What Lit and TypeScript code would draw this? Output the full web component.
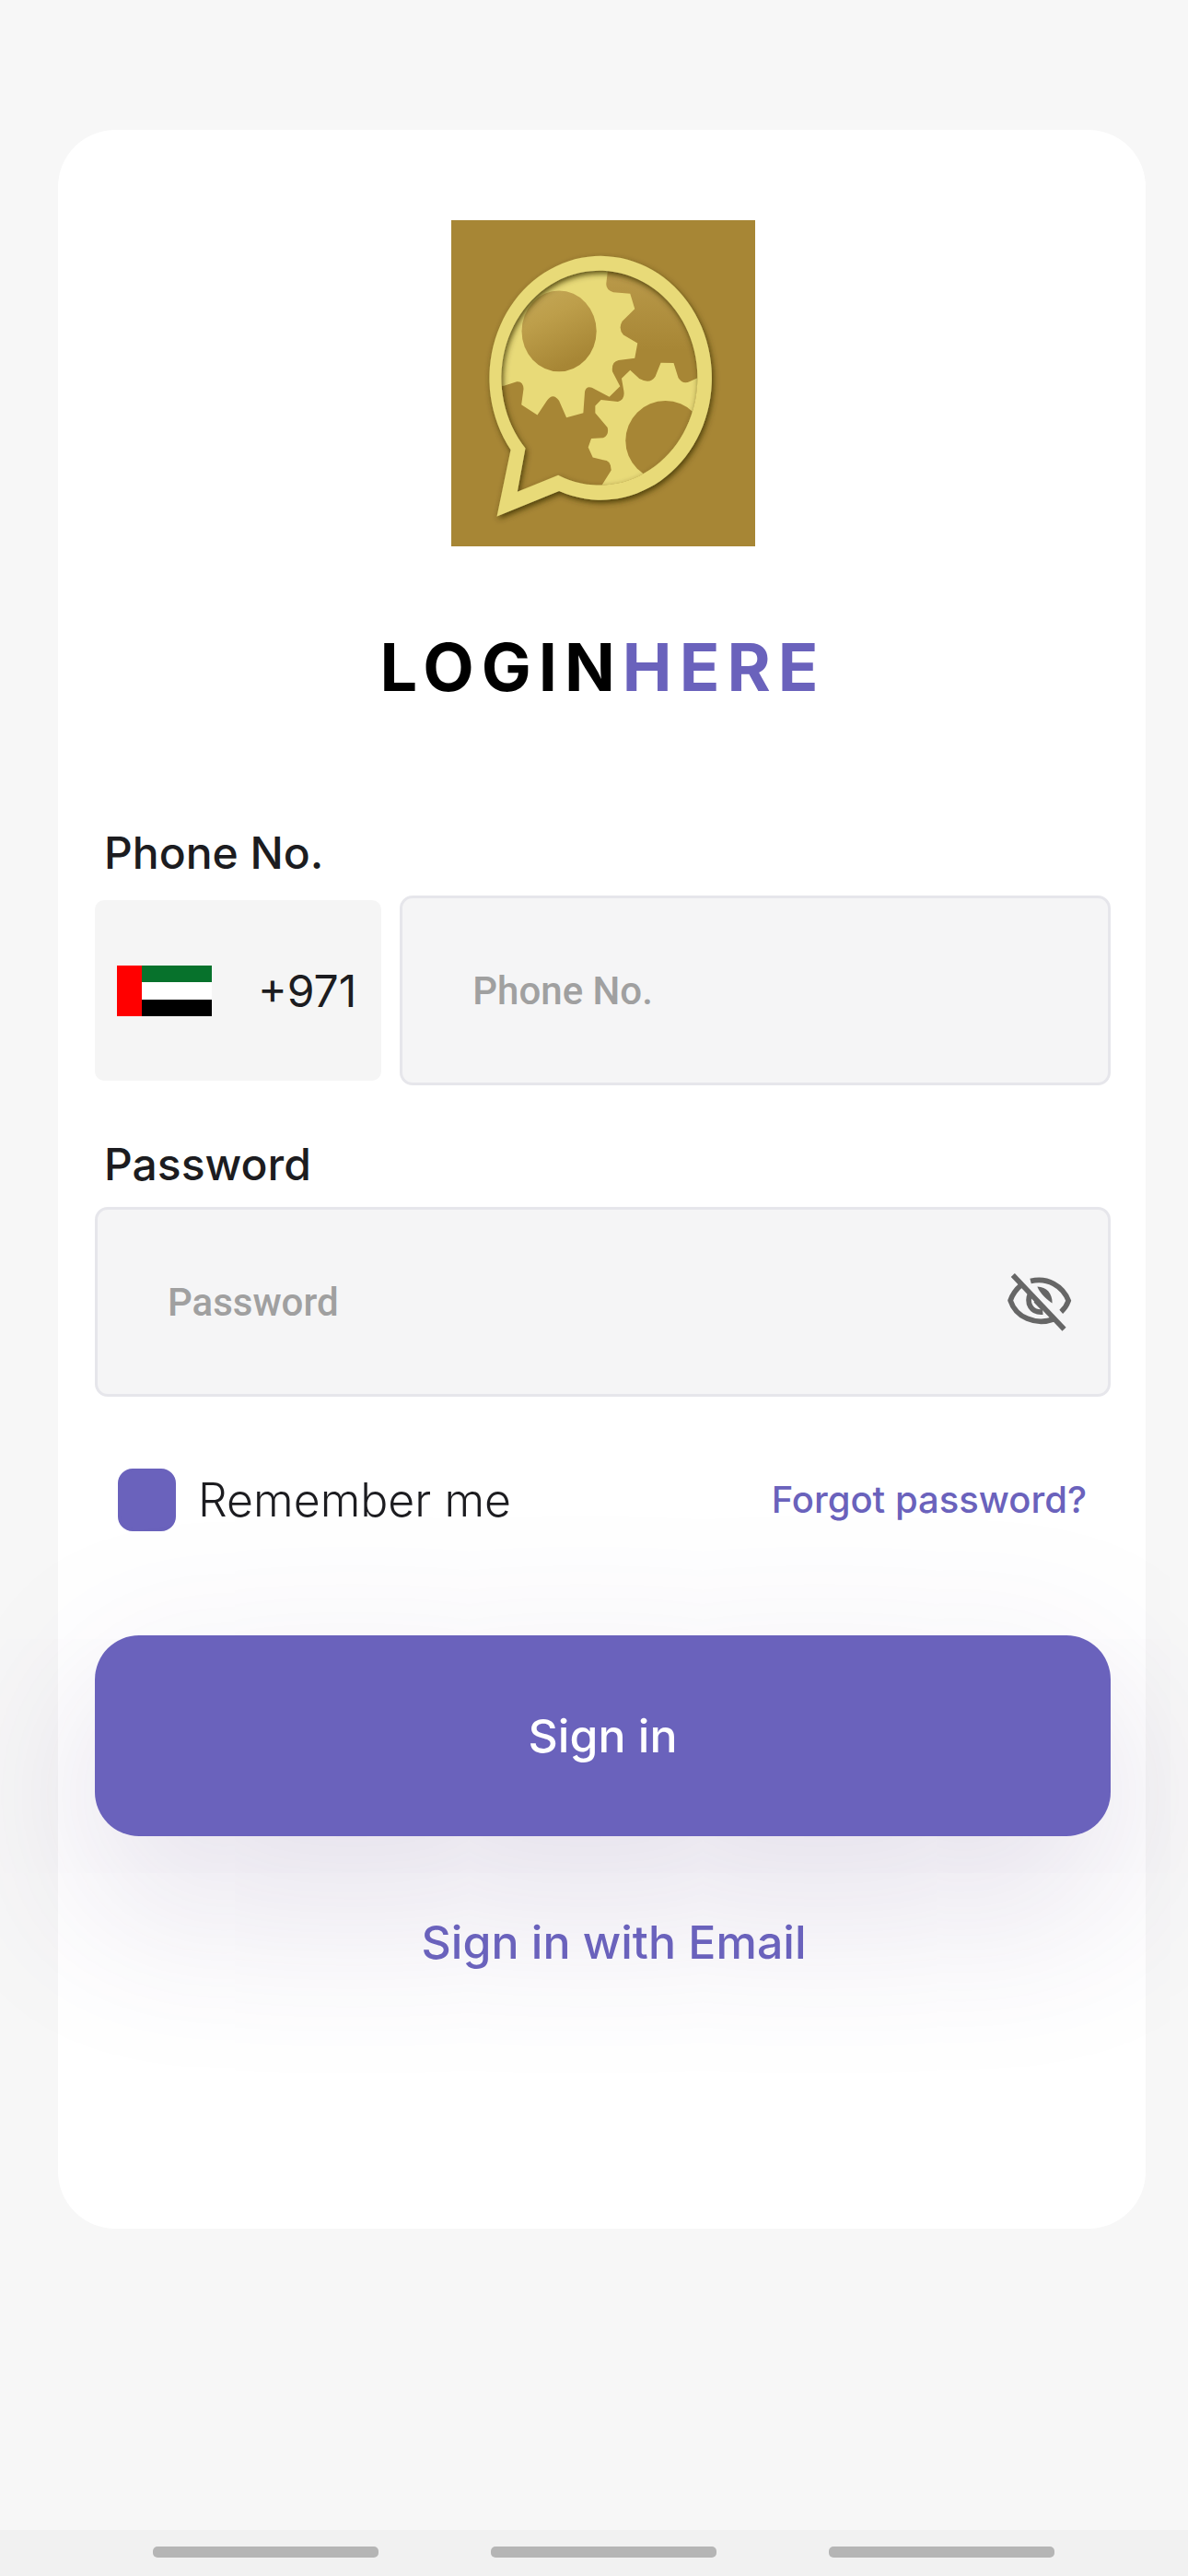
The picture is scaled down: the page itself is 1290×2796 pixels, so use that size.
import { LitElement, html, css, svg } from "lit";
import { customElement, state } from "lit/decorators.js";

const logo = svg`
  <svg class="logo" viewBox="56 56 992 1064" preserveAspectRatio="none" role="img" aria-label="Gears in a speech bubble">
    <defs>
      <clipPath id="inside">
        <path d="M298 800 A320 350 0 1 1 405 888 L272 942 Z" />
      </clipPath>
      <linearGradient id="sheen" x1="0.25" y1="0" x2="0.65" y2="0.9">
        <stop offset="0" stop-color="#c3a654" />
        <stop offset="0.35" stop-color="#bd9e4a" />
        <stop offset="1" stop-color="#a78635" />
      </linearGradient>
      <linearGradient id="glow" x1="0.6" y1="0" x2="0.6" y2="1">
        <stop offset="0" stop-color="#bb9b4b" />
        <stop offset="1" stop-color="#a78635" />
      </linearGradient>
      <filter id="shade" x="-20%" y="-20%" width="140%" height="140%">
        <feDropShadow dx="5" dy="9" stdDeviation="9" flood-color="#3c3000" flood-opacity="0.85" />
      </filter>
    </defs>
    <rect x="56" y="56" width="992" height="1064" fill="#a78635" />
    <g clip-path="url(#inside)">
      <path fill="url(#glow)" d="M560 210 H900 V480 H560 Z" />
      <path fill="#e8da78" d="M200 600 L228 596 L270 583 Q290 580 292 606 L285 658 L337 692 L368 645 Q388 616 408 645 L432 700 L487 685 L492 615 Q496 596 515 602 L572 632 L607 598 L582 550 Q578 518 602 513 L655 506 L664 457 L618 430 Q600 410 614 386 L655 345 L640 296 L585 291 Q560 284 562 262 L568 210 L200 200 Z" />
      <ellipse cx="408" cy="418" rx="122" ry="132" fill="url(#sheen)" />
      <path fill="#e8da78" d="M545 925 L578 872 Q578 838 552 838 L518 830 L503 797 L513 768 L552 766 Q572 758 566 732 L526 685 L526 662 L545 642 L600 648 Q624 642 619 612 L612 572 L640 545 L670 573 Q705 592 722 566 L740 521 L782 522 L797 570 Q812 594 835 582 L875 564 L940 600 L920 980 L540 980 Z" />
      <ellipse cx="755" cy="775" rx="130" ry="130" fill="#a78635" />
    </g>
    <path filter="url(#shade)" fill="#e8da78" fill-rule="evenodd"
      d="M250 805 A363 398 0 1 1 408 940 L205 1022 Z M298 800 A320 350 0 1 1 405 888 L272 942 Z" />
  </svg>`;

const flag = svg`
  <svg class="flag" viewBox="0 0 103 55" aria-hidden="true">
    <rect width="103" height="55" fill="#fff" />
    <rect width="103" height="18" fill="#07722c" />
    <rect y="37" width="103" height="18" fill="#000" />
    <rect width="27" height="55" fill="#f00" />
  </svg>`;

const eyeOff = svg`
  <svg class="eye" viewBox="60 45 240 220" aria-hidden="true" fill="none" stroke="#666" stroke-width="17">
    <path d="M150 86 C205 72 256 102 274 150 Q266 172 250 186" />
    <path d="M119 99 Q94 120 84 149 C102 204 165 232 227 210" />
    <path d="M150 124 C134 158 152 190 190 187" />
    <path d="M166 150 L192 177" stroke-width="15" />
    <path fill="#666" stroke="none" d="M172 104 C203 105 221 126 221 158 C207 150 180 126 172 104 Z" />
    <path d="M92 66 L260 243" />
  </svg>`;

@customElement("app-root")
export class AppRoot extends LitElement {
  @state() private revealed = false;

  static styles = css`
    :host {
      display: block;
      font-family: Inter, "Liberation Sans", sans-serif;
      color: #1c1c20;
    }
    * { box-sizing: border-box; }
    button, input { font: inherit; color: inherit; margin: 0; }
    button { border: 0; padding: 0; background: none; cursor: pointer; }
    a { color: #6a62bc; text-decoration: none; font-weight: 500; }
    .page {
      display: flex;
      flex-direction: column;
      min-height: 100vh;
      background: #f7f7f7;
    }
    .content { flex: 1; padding: 141px 46px 48px 63px; }
    .card {
      display: flex;
      flex-direction: column;
      padding: 98px 38px 281px 40px;
      border-radius: 62px;
      background: #fff;
    }
    .logo { display: block; width: 330px; height: 354px; align-self: center; }
    .title {
      margin: 87px 0 0;
      font-size: 72px;
      line-height: 88px;
      font-weight: 700;
      letter-spacing: 8px;
      text-align: center;
      color: #000;
    }
    .accent { color: #6a62bc; }
    .field { display: flex; flex-direction: column; gap: 16px; margin-top: 56px; }
    .field.first { margin-top: 128px; }
    .label { padding-left: 10px; font-size: 48px; line-height: 60px; font-weight: 500; }
    .line { display: flex; align-items: center; gap: 20px; }
    .country {
      display: flex;
      align-items: center;
      gap: 50px;
      height: 196px;
      padding: 0 27px 0 24px;
      border-radius: 10px;
      background: #f5f5f5;
      font-size: 48px;
    }
    .flag { width: 103px; height: 55px; }
    .box {
      flex: 1;
      min-width: 0;
      display: flex;
      align-items: center;
      height: 206px;
      padding-right: 34px;
      border: 3px solid #e6e6eb;
      border-radius: 14px;
      background: #f5f5f6;
    }
    .input {
      flex: 1;
      min-width: 0;
      height: 100%;
      padding: 0 0 0 76px;
      border: 0;
      outline: 0;
      background: none;
      font-family: Roboto, sans-serif;
      font-size: 42px;
      font-weight: 500;
    }
    .input::placeholder { color: #a0a0a0; opacity: 1; }
    .eye { display: block; width: 80px; height: 73px; }
    .options {
      display: flex;
      align-items: center;
      justify-content: space-between;
      margin-top: 78px;
      padding: 0 26px 0 25px;
    }
    .remember {
      display: flex;
      align-items: center;
      gap: 24px;
      font-size: 50px;
      line-height: 60px;
      font-weight: 300;
    }
    .check {
      appearance: none;
      width: 63px;
      height: 68px;
      border: 3px solid #6a62bc;
      border-radius: 16px;
      background: #fff;
    }
    .check:checked { background: #6a62bc; }
    .forgot { font-size: 40px; line-height: 60px; }
    .submit {
      height: 218px;
      margin-top: 113px;
      border-radius: 48px;
      background: #6a62bc;
      box-shadow: 0 64px 200px rgba(80, 50, 120, 0.18);
      color: #fff;
      font-size: 50px;
      font-weight: 500;
    }
    .alt {
      position: relative;
      margin-top: 85px;
      padding-left: 24px;
      font-size: 50px;
      line-height: 60px;
      text-align: center;
    }
    .nav {
      display: flex;
      gap: 122px;
      padding: 18px 145px 20px 166px;
      background: #f1f1f1;
    }
    .key { flex: 1; height: 12px; border-radius: 5px; background: #b5b5b5; }
  `;

  render() {
    return html`
      <div class="page">
        <main class="content">
          <form class="card" @submit=${(e: Event) => e.preventDefault()}>
            ${logo}
            <h1 class="title">LOGIN<span class="accent">HERE</span></h1>

            <div class="field first">
              <label class="label" for="phone">Phone No.</label>
              <div class="line">
                <button class="country" type="button">${flag}<span>+971</span></button>
                <div class="box">
                  <input class="input" id="phone" type="tel" placeholder="Phone No." />
                </div>
              </div>
            </div>

            <div class="field">
              <label class="label" for="password">Password</label>
              <div class="line">
                <div class="box">
                  <input class="input" id="password" type=${this.revealed ? "text" : "password"} placeholder="Password" />
                  <button type="button" aria-label="Show password" @click=${() => (this.revealed = !this.revealed)}>
                    ${eyeOff}
                  </button>
                </div>
              </div>
            </div>

            <div class="options">
              <label class="remember"><input class="check" type="checkbox" checked />Remember me</label>
              <a class="forgot" href="#forgot">Forgot password?</a>
            </div>

            <button class="submit" type="submit">Sign in</button>
            <div class="alt"><a href="#email">Sign in with Email</a></div>
          </form>
        </main>
        <nav class="nav" aria-label="System">
          <button class="key" aria-label="Recent apps"></button>
          <button class="key" aria-label="Home"></button>
          <button class="key" aria-label="Back"></button>
        </nav>
      </div>
    `;
  }
}
